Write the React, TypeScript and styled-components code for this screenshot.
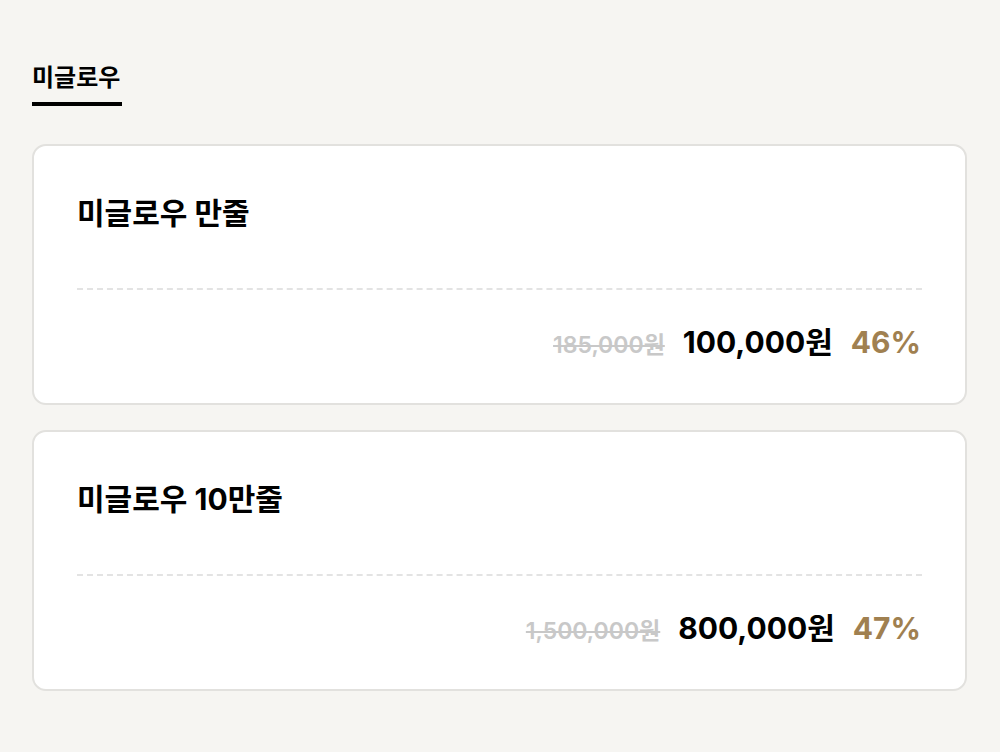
import styled, { createGlobalStyle } from 'styled-components'

const GlobalStyle = createGlobalStyle`
  html, body {
    margin: 0;
    padding: 0;
    background: #f6f5f2;
    font-family: Inter, "Noto Sans CJK KR", sans-serif;
    color: #000;
  }
`

type Product = { name: string; origin: string; price: string; rate: string };

const products: Product[] = [
  { name: '미글로우 만줄', origin: '185,000원', price: '100,000원', rate: '46%' },
  { name: '미글로우 10만줄', origin: '1,500,000원', price: '800,000원', rate: '47%' },
];

const App = () => {
  return (
    <Page>
      <GlobalStyle />
      <Tabs>
        <Tab>미글로우</Tab>
      </Tabs>
      <List>
        {products.map((p) => (
          <Card key={p.name}>
            <Title>{p.name}</Title>
            <Divider />
            <PriceRow>
              <Origin>{p.origin}</Origin>
              <Price>{p.price}</Price>
              <Rate>{p.rate}</Rate>
            </PriceRow>
          </Card>
        ))}
      </List>
    </Page>
  );
}

const Page = styled.div`
  padding: 62px 32px 40px;
  min-height: 752px;
  box-sizing: border-box;
`
const Tabs = styled.div`
  display: flex;
`
const Tab = styled.div`
  font-size: 24px;
  font-weight: 700;
  line-height: 32px;
  padding-bottom: 8px;
  width: 90px;
  border-bottom: 4px solid #000;
`
const List = styled.div`
  display: flex;
  flex-direction: column;
  gap: 25px;
  margin-top: 38px;
  width: 935px;
`
const Card = styled.div`
  background: #fff;
  border: 2px solid #e2e1de;
  border-radius: 14px;
  padding: 48px 43px 0 43px;
  height: 261px;
  box-sizing: border-box;
`
const Title = styled.div`
  font-size: 30px;
  font-weight: 700;
  line-height: 38px;
`
const Divider = styled.div`
  margin-top: 56px;
  border-top: 2px dashed #e3e3e3;
`
const PriceRow = styled.div`
  display: flex;
  justify-content: flex-end;
  align-items: baseline;
  margin-top: 34px;
  padding-right: 1px;
  line-height: 36px;
`
const Origin = styled.span`
  font-size: 23px;
  font-weight: 600;
  color: #c8c8c8;
  text-decoration: line-through;
  margin-right: 18px;
`
const Price = styled.span`
  font-size: 30px;
  font-weight: 700;
  color: #000;
  margin-right: 18px;
`
const Rate = styled.span`
  font-size: 30px;
  font-weight: 700;
  color: #a08050;
`

export default App
